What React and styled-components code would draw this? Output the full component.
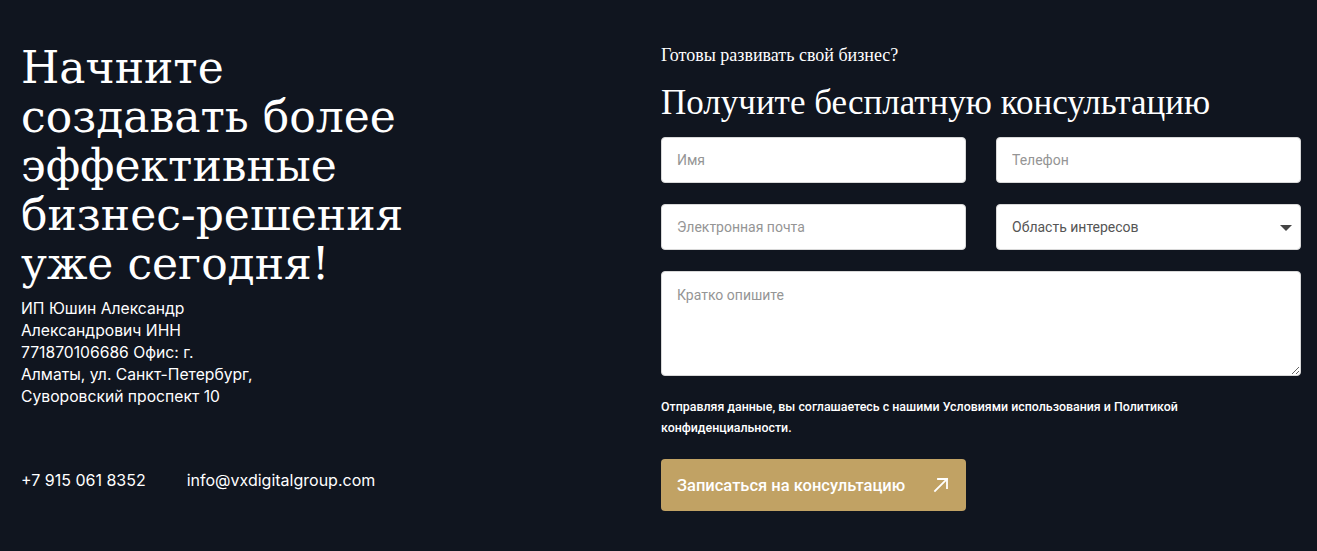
import React from 'react';
import styled, { createGlobalStyle } from 'styled-components';

const GlobalStyle = createGlobalStyle`
  html, body {
    margin: 0;
    padding: 0;
    background: #10151f;
  }
  * { box-sizing: border-box; }
`;

const Section = styled.section`
  display: grid;
  grid-template-columns: 640px 640px;
  padding: 40px 16px 40px 21px;
  min-height: 551px;
  background: #10151f;
  color: #fff;
`;

const LeftCol = styled.div`
  display: flex;
  flex-direction: column;
`;

const Headline = styled.h2`
  margin: 3px 0 0;
  font-family: 'DejaVu Serif', 'Liberation Serif', serif;
  font-weight: 400;
  font-size: 44px;
  line-height: 49px;
  color: #fff;
`;

const Requisites = styled.p`
  margin: 10px 0 0;
  width: 237px;
  font-family: Inter, 'Noto Sans', sans-serif;
  font-size: 15.7px;
  line-height: 22px;
  color: #fff;
`;

const Contacts = styled.div`
  display: flex;
  gap: 41px;
  margin-top: 61px;
  font-family: Inter, 'Noto Sans', sans-serif;
  font-size: 16px;
  line-height: 22px;
`;

const ContactLink = styled.a`
  color: #fff;
  text-decoration: none;
`;

const RightCol = styled.form`
  display: flex;
  flex-direction: column;
`;

const Kicker = styled.p`
  margin: 4px 0 0;
  font-family: 'Liberation Serif', serif;
  font-size: 18px;
  line-height: 22px;
  color: #fff;
`;

const Title = styled.h3`
  margin: 14px 0 0;
  font-family: 'Liberation Serif', serif;
  font-weight: 400;
  font-size: 35px;
  line-height: 46px;
  color: #fff;
`;

const FieldGrid = styled.div`
  display: grid;
  grid-template-columns: 305px 305px;
  column-gap: 30px;
  row-gap: 21px;
  margin-top: 11px;
`;

const fieldBase = `
  width: 100%;
  border: 1px solid #d8d8d8;
  border-radius: 4px;
  background: #fff;
  font-family: Roboto, 'Liberation Sans', sans-serif;
  font-size: 14px;
  color: #333;
  padding: 0 15px;
  outline: none;
  &::placeholder { color: #959595; }
`;

const Input = styled.input`
  ${fieldBase}
  height: 46px;
`;

const SelectWrap = styled.div`
  position: relative;
`;

const Select = styled.select`
  ${fieldBase}
  height: 46px;
  appearance: none;
  color: #555;
`;

const Caret = styled.span`
  position: absolute;
  right: 9px;
  top: 21px;
  width: 0;
  height: 0;
  border-left: 6px solid transparent;
  border-right: 6px solid transparent;
  border-top: 6px solid #444;
  pointer-events: none;
`;

const TextArea = styled.textarea`
  ${fieldBase}
  grid-column: 1 / -1;
  height: 105px;
  padding: 15px;
  resize: vertical;
  display: block;
`;

const Consent = styled.p`
  margin: 20px 0 0;
  width: 540px;
  font-family: Roboto, 'Liberation Sans', sans-serif;
  font-weight: 500;
  font-size: 12.4px;
  line-height: 21px;
  color: #fff;
`;

const SubmitButton = styled.button`
  display: flex;
  align-items: center;
  justify-content: space-between;
  width: 305px;
  height: 52px;
  margin-top: 21px;
  padding: 0 17px 0 16px;
  border: none;
  border-radius: 4px;
  background: #c1a264;
  color: #fff;
  font-family: Roboto, 'Liberation Sans', sans-serif;
  font-size: 16.5px;
  font-weight: 500;
  cursor: pointer;
`;

const ArrowIcon = () => (
  <svg width="16" height="16" viewBox="0 0 16 16" fill="none" stroke="#fff" strokeWidth="1.8" strokeLinecap="square">
    <path d="M2 14 L14 2" />
    <path d="M5 2 H14 V11" />
  </svg>
);

export default function App() {
  return (
    <>
      <GlobalStyle />
      <Section>
        <LeftCol>
          <Headline>
            Начните
            <br />
            создавать более
            <br />
            эффективные
            <br />
            бизнес-решения
            <br />
            уже сегодня!
          </Headline>
          <Requisites>
            ИП Юшин Александр Александрович ИНН 771870106686 Офис: г. Алматы, ул. Санкт-Петербург, Суворовский проспект 10
          </Requisites>
          <Contacts>
            <ContactLink href="#">+7 915 061 8352</ContactLink>
            <ContactLink href="#">info@vxdigitalgroup.com</ContactLink>
          </Contacts>
        </LeftCol>
        <RightCol onSubmit={(e) => e.preventDefault()}>
          <Kicker>Готовы развивать свой бизнес?</Kicker>
          <Title>Получите бесплатную консультацию</Title>
          <FieldGrid>
            <Input placeholder="Имя" />
            <Input placeholder="Телефон" />
            <Input placeholder="Электронная почта" />
            <SelectWrap>
              <Select defaultValue="">
                <option value="">Область интересов</option>
              </Select>
              <Caret />
            </SelectWrap>
            <TextArea placeholder="Кратко опишите" />
          </FieldGrid>
          <Consent>
            Отправляя данные, вы соглашаетесь с нашими Условиями использования и Политикой конфиденциальности.
          </Consent>
          <SubmitButton type="submit">
            Записаться на консультацию
            <ArrowIcon />
          </SubmitButton>
        </RightCol>
      </Section>
    </>
  );
}
